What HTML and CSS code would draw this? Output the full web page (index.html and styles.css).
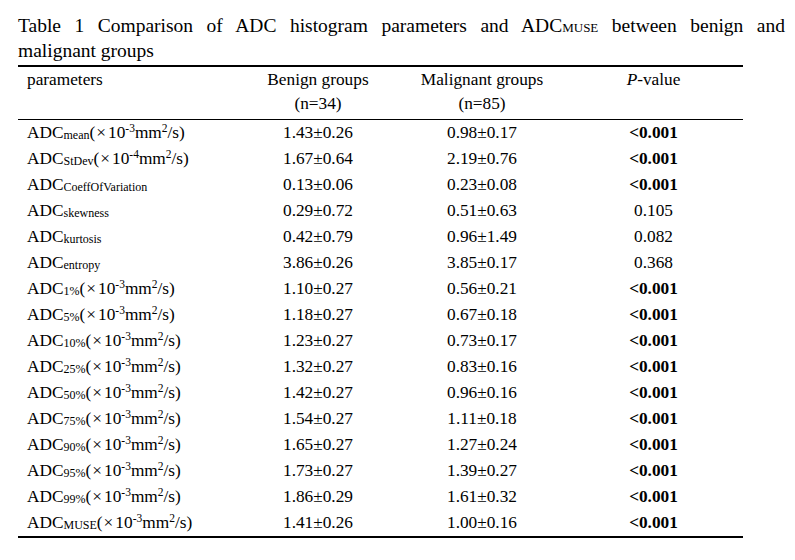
FILE: index.html
```html
<!DOCTYPE html>
<html>
<head>
<meta charset="utf-8">
<link rel="stylesheet" href="styles.css">
</head>
<body>
<div class="page">
  <p class="caption"><span class="line1">Table 1 Comparison of ADC histogram parameters and ADC<span class="sc">MUSE</span> between benign and</span><span class="line2">malignant groups</span></p>
  <table class="data">
    <colgroup>
      <col class="c1"><col class="c2"><col class="c3"><col class="c4">
    </colgroup>
    <thead>
      <tr>
        <th class="lbl">parameters<br>&nbsp;</th>
        <th>Benign groups<br>(n=34)</th>
        <th>Malignant groups<br>(n=85)</th>
        <th><i>P</i>-value<br>&nbsp;</th>
      </tr>
    </thead>
    <tbody>
      <tr><td class="lbl">ADC<sub>mean</sub>(<span class="x">×</span>10<sup>-3</sup>mm<sup>2</sup>/s)</td><td>1.43±0.26</td><td>0.98±0.17</td><td><b>&lt;0.001</b></td></tr>
      <tr><td class="lbl">ADC<sub>StDev</sub>(<span class="x">×</span>10<sup>-4</sup>mm<sup>2</sup>/s)</td><td>1.67±0.64</td><td>2.19±0.76</td><td><b>&lt;0.001</b></td></tr>
      <tr><td class="lbl">ADC<sub>CoeffOfVariation</sub></td><td>0.13±0.06</td><td>0.23±0.08</td><td><b>&lt;0.001</b></td></tr>
      <tr><td class="lbl">ADC<sub>skewness</sub></td><td>0.29±0.72</td><td>0.51±0.63</td><td>0.105</td></tr>
      <tr><td class="lbl">ADC<sub>kurtosis</sub></td><td>0.42±0.79</td><td>0.96±1.49</td><td>0.082</td></tr>
      <tr><td class="lbl">ADC<sub>entropy</sub></td><td>3.86±0.26</td><td>3.85±0.17</td><td>0.368</td></tr>
      <tr><td class="lbl">ADC<sub>1%</sub>(<span class="x">×</span>10<sup>-3</sup>mm<sup>2</sup>/s)</td><td>1.10±0.27</td><td>0.56±0.21</td><td><b>&lt;0.001</b></td></tr>
      <tr><td class="lbl">ADC<sub>5%</sub>(<span class="x">×</span>10<sup>-3</sup>mm<sup>2</sup>/s)</td><td>1.18±0.27</td><td>0.67±0.18</td><td><b>&lt;0.001</b></td></tr>
      <tr><td class="lbl">ADC<sub>10%</sub>(<span class="x">×</span>10<sup>-3</sup>mm<sup>2</sup>/s)</td><td>1.23±0.27</td><td>0.73±0.17</td><td><b>&lt;0.001</b></td></tr>
      <tr><td class="lbl">ADC<sub>25%</sub>(<span class="x">×</span>10<sup>-3</sup>mm<sup>2</sup>/s)</td><td>1.32±0.27</td><td>0.83±0.16</td><td><b>&lt;0.001</b></td></tr>
      <tr><td class="lbl">ADC<sub>50%</sub>(<span class="x">×</span>10<sup>-3</sup>mm<sup>2</sup>/s)</td><td>1.42±0.27</td><td>0.96±0.16</td><td><b>&lt;0.001</b></td></tr>
      <tr><td class="lbl">ADC<sub>75%</sub>(<span class="x">×</span>10<sup>-3</sup>mm<sup>2</sup>/s)</td><td>1.54±0.27</td><td>1.11±0.18</td><td><b>&lt;0.001</b></td></tr>
      <tr><td class="lbl">ADC<sub>90%</sub>(<span class="x">×</span>10<sup>-3</sup>mm<sup>2</sup>/s)</td><td>1.65±0.27</td><td>1.27±0.24</td><td><b>&lt;0.001</b></td></tr>
      <tr><td class="lbl">ADC<sub>95%</sub>(<span class="x">×</span>10<sup>-3</sup>mm<sup>2</sup>/s)</td><td>1.73±0.27</td><td>1.39±0.27</td><td><b>&lt;0.001</b></td></tr>
      <tr><td class="lbl">ADC<sub>99%</sub>(<span class="x">×</span>10<sup>-3</sup>mm<sup>2</sup>/s)</td><td>1.86±0.29</td><td>1.61±0.32</td><td><b>&lt;0.001</b></td></tr>
      <tr><td class="lbl">ADC<sub>MUSE</sub>(<span class="x">×</span>10<sup>-3</sup>mm<sup>2</sup>/s)</td><td>1.41±0.26</td><td>1.00±0.16</td><td><b>&lt;0.001</b></td></tr>
    </tbody>
  </table>
</div>
</body>
</html>
```
FILE: styles.css
```css
html, body {
  margin: 0;
  padding: 0;
  background: #ffffff;
}
body {
  font-family: "Liberation Serif", "Times New Roman", Times, "Nimbus Roman", "FreeSerif", "Noto Serif", "DejaVu Serif", serif;
  color: #000000;
}
.page {
  padding: 14px 10px 0 18px;
}
.caption {
  margin: 0;
  width: 767px;
  font-size: 19.5px;
  line-height: 23px;
}
.caption .line1 {
  display: block;
  text-align: justify;
  text-align-last: justify;
}
.caption .line2 {
  display: block;
}
.caption .sc {
  font-size: 13px;
}
.data {
  margin-top: 3px;
  width: 725px;
  border-collapse: collapse;
  font-size: 17.3px;
  border-top: 2px solid #000;
  border-bottom: 2px solid #000;
}
.c1 { width: 218px; }
.c2 { width: 164px; }
.c3 { width: 164px; }
.c4 { width: 179px; }
.data th {
  font-weight: normal;
  text-align: center;
  line-height: 24px;
  padding: 1px 0 3px 0;
  border-bottom: 1px solid #000;
  vertical-align: top;
}
.data td {
  text-align: center;
  height: 26px;
  padding: 0;
  line-height: 26px;
  vertical-align: middle;
}
.data .lbl {
  text-align: left;
  padding-left: 9px;
}
.data .x {
  margin: 0 2px 0 1px;
}
.data sub {
  font-size: 12px;
  vertical-align: -1px;
  line-height: 0;
}
.data sup {
  font-size: 11.5px;
  vertical-align: 6px;
  line-height: 0;
}
.data b {
  font-weight: bold;
}
```
